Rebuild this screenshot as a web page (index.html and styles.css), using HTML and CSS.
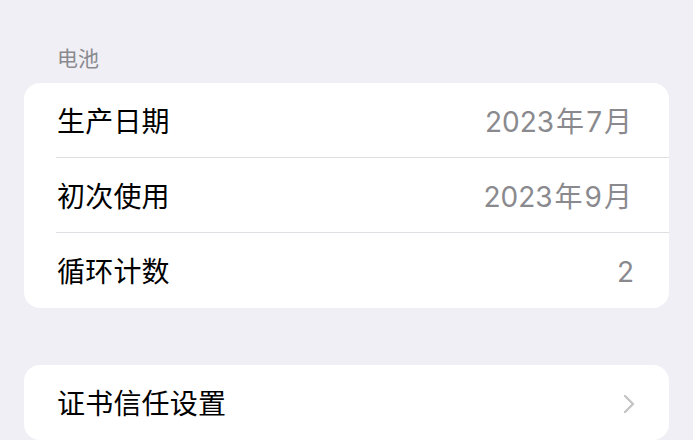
FILE: index.html
```html
<!DOCTYPE html>
<html lang="zh-CN">
<head>
<meta charset="utf-8">
<title>电池</title>
<link rel="stylesheet" href="styles.css">
</head>
<body>
<main class="page">
  <h2 class="section-title">电池</h2>
  <section class="group">
    <div class="row">
      <span class="label">生产日期</span>
      <span class="value">2023<span class="unit">年</span>7<span class="unit">月</span></span>
    </div>
    <div class="row">
      <span class="label">初次使用</span>
      <span class="value">2023<span class="unit">年</span>9<span class="unit">月</span></span>
    </div>
    <div class="row">
      <span class="label">循环计数</span>
      <span class="value">2</span>
    </div>
  </section>

  <section class="group group-spaced">
    <div class="row row-link">
      <span class="label">证书信任设置</span>
      <svg class="chevron" viewBox="0 0 12 20" width="12" height="20" aria-hidden="true">
        <path d="M2 2 L10 10 L2 18" fill="none" stroke="#c4c4c7" stroke-width="2.4" stroke-linecap="round" stroke-linejoin="round"/>
      </svg>
    </div>
  </section>
</main>
</body>
</html>
```

FILE: styles.css
```css
html, body {
  margin: 0;
  padding: 0;
  background: #f0eff5;
}

body {
  font-family: Inter, "Noto Sans CJK SC", sans-serif;
  color: #000;
  -webkit-font-smoothing: antialiased;
}

.page {
  padding: 0 24px;
}

.section-title {
  margin: 47px 0 12px 33px;
  font-size: 21px;
  line-height: 24px;
  font-weight: 400;
  color: #8a8a8e;
}

.group {
  background: #fff;
  border-radius: 16px;
  overflow: hidden;
}

.group-spaced {
  margin-top: 57px;
}

.row {
  position: relative;
  display: flex;
  align-items: center;
  justify-content: space-between;
  height: 74px;
  padding: 3px 35px 0 33px;
  box-sizing: border-box;
}

.row + .row {
  margin-top: 1px;
}

/* hairline between rows, inset to the text column */
.row + .row::before {
  content: "";
  position: absolute;
  left: 32px;
  right: 0;
  top: -1px;
  height: 1px;
  background: #dfdfe3;
}

.row:last-child {
  height: 75px;
}

.row-link {
  height: 74px;
  padding-right: 34px;
}

.label {
  font-size: 28px;
  line-height: 34px;
  font-weight: 400;
  letter-spacing: 0.2px;
}

.value {
  font-size: 28px;
  line-height: 34px;
  font-weight: 400;
  color: #8a8a8e;
}

.unit {
  margin: 0 2px;
}

.chevron {
  display: block;
}
```
